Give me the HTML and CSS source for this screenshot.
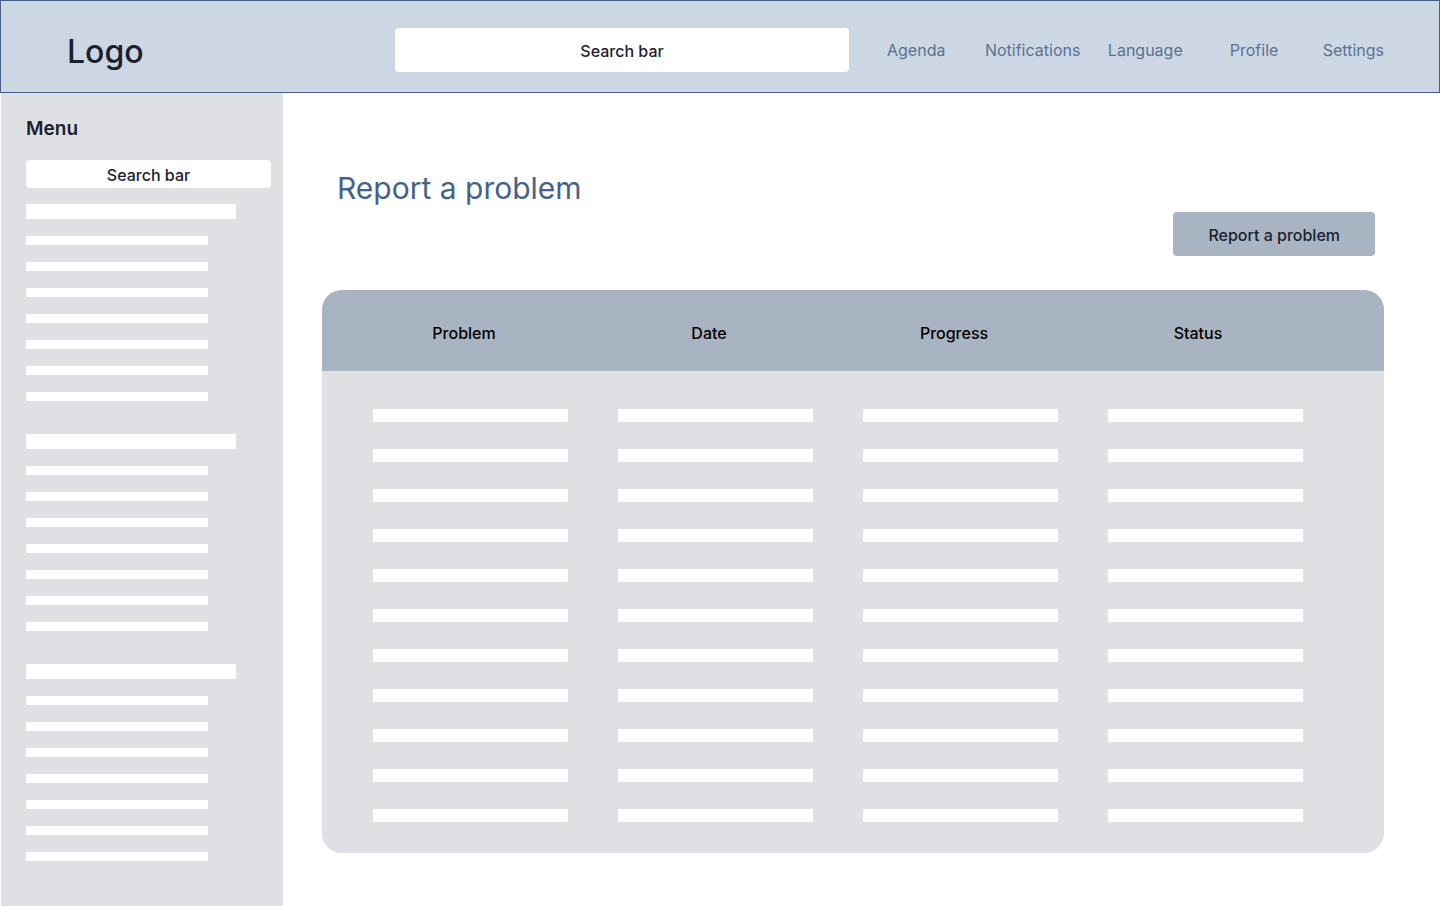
FILE: index.html
```html
<!DOCTYPE html>
<html lang="en">
<head>
  <meta charset="utf-8">
  <meta name="viewport" content="width=device-width, initial-scale=1">
  <title>Report a problem</title>
  <link rel="stylesheet" href="styles.css">
</head>
<body>
  <header class="topbar">
    <a class="logo" href="#">Logo</a>
    <input class="search search-large" type="text" placeholder="Search bar" aria-label="Search the site">
    <nav class="topnav" aria-label="Main">
      <a href="#">Agenda</a>
      <a href="#">Notifications</a>
      <a href="#">Language</a>
      <a href="#">Profile</a>
      <a href="#">Settings</a>
    </nav>
  </header>

  <div class="layout">
    <aside class="sidebar">
      <h2 class="menu-title">Menu</h2>
      <input class="search search-small" type="text" placeholder="Search bar" aria-label="Search the menu">
      <div class="menu-groups">
        <ul class="menu-group"><li class="head"></li><li></li><li></li><li></li><li></li><li></li><li></li><li></li></ul>
        <ul class="menu-group"><li class="head"></li><li></li><li></li><li></li><li></li><li></li><li></li><li></li></ul>
        <ul class="menu-group"><li class="head"></li><li></li><li></li><li></li><li></li><li></li><li></li><li></li></ul>
      </div>
    </aside>

    <main class="content">
      <div class="page-head">
        <h1 class="page-title">Report a problem</h1>
        <button class="report-button" type="button">Report a problem</button>
      </div>
      <table class="problems">
        <colgroup>
          <col class="col-problem"><col class="col-date"><col class="col-progress"><col class="col-status">
        </colgroup>
        <thead>
          <tr><th scope="col">Problem</th><th scope="col">Date</th><th scope="col">Progress</th><th scope="col">Status</th></tr>
        </thead>
        <tbody>
          <tr><td><span class="bar"></span></td><td><span class="bar"></span></td><td><span class="bar"></span></td><td><span class="bar"></span></td></tr>
          <tr><td><span class="bar"></span></td><td><span class="bar"></span></td><td><span class="bar"></span></td><td><span class="bar"></span></td></tr>
          <tr><td><span class="bar"></span></td><td><span class="bar"></span></td><td><span class="bar"></span></td><td><span class="bar"></span></td></tr>
          <tr><td><span class="bar"></span></td><td><span class="bar"></span></td><td><span class="bar"></span></td><td><span class="bar"></span></td></tr>
          <tr><td><span class="bar"></span></td><td><span class="bar"></span></td><td><span class="bar"></span></td><td><span class="bar"></span></td></tr>
          <tr><td><span class="bar"></span></td><td><span class="bar"></span></td><td><span class="bar"></span></td><td><span class="bar"></span></td></tr>
          <tr><td><span class="bar"></span></td><td><span class="bar"></span></td><td><span class="bar"></span></td><td><span class="bar"></span></td></tr>
          <tr><td><span class="bar"></span></td><td><span class="bar"></span></td><td><span class="bar"></span></td><td><span class="bar"></span></td></tr>
          <tr><td><span class="bar"></span></td><td><span class="bar"></span></td><td><span class="bar"></span></td><td><span class="bar"></span></td></tr>
          <tr><td><span class="bar"></span></td><td><span class="bar"></span></td><td><span class="bar"></span></td><td><span class="bar"></span></td></tr>
          <tr><td><span class="bar"></span></td><td><span class="bar"></span></td><td><span class="bar"></span></td><td><span class="bar"></span></td></tr>
        </tbody>
      </table>
    </main>
  </div>
</body>
</html>
```
FILE: styles.css
```css
* {
  box-sizing: border-box;
}

body {
  display: flex;
  flex-direction: column;
  min-height: 100vh;
  margin: 0;
  background: #ffffff;
  color: #1c2130;
  font-family: Inter, "Open Sans", sans-serif;
  font-size: 16px;
  line-height: 20px;
}

.topbar {
  display: grid;
  grid-template-columns: 328fr 454fr 535fr;
  align-items: center;
  padding: 27px 55px 20px 66px;
  border: 1px solid #456187;
  background: #cdd7e3;
}

.logo {
  padding-top: 4px;
  color: #1c2130;
  font-size: 32px;
  font-weight: 500;
  line-height: 40px;
  text-decoration: none;
}

.search {
  width: 100%;
  padding: 2px 12px 0;
  border: 0;
  border-radius: 4px;
  background: #ffffff;
  color: #1c2130;
  font: inherit;
  font-weight: 500;
  text-align: center;
}

.search::placeholder {
  color: #1c2130;
  opacity: 1;
}

.search-large {
  height: 44px;
}

.search-small {
  height: 28px;
}

.topnav {
  display: grid;
  grid-template-columns: 98fr 123fr 122fr 93fr 61fr;
  margin-left: 38px;
}

.topnav a {
  color: #587296;
  text-decoration: none;
}

.layout {
  display: flex;
  flex: 1;
}

.sidebar {
  flex: none;
  width: 282px;
  margin-left: 1px;
  padding: 22px 12px 32px 25px;
  background: #dfe0e4;
}

.menu-title {
  margin: 0 0 17px;
  font-size: 19px;
  font-weight: 600;
  line-height: 28px;
}

.menu-groups {
  display: flex;
  flex-direction: column;
  gap: 33px;
  margin-top: 16px;
}

.menu-group {
  display: flex;
  flex-direction: column;
  gap: 17px;
  margin: 0;
  padding: 0;
  list-style: none;
}

.menu-group li {
  width: 182px;
  height: 9px;
  background: #ffffff;
}

.menu-group .head {
  width: 210px;
  height: 15px;
}

.content {
  flex: 1;
  padding: 75px 56px 53px 39px;
}

.page-head {
  display: flex;
  flex-direction: column;
  gap: 4px;
  margin-bottom: 34px;
  padding: 0 9px 0 15px;
}

.page-title {
  margin: 0;
  color: #456187;
  font-size: 30px;
  font-weight: 400;
  line-height: 40px;
}

.report-button {
  align-self: flex-end;
  height: 44px;
  padding: 2px 35px 0;
  border: 0;
  border-radius: 4px;
  background: #a9b4c2;
  color: #1c2130;
  font: inherit;
  font-weight: 500;
}

.problems {
  width: 100%;
  overflow: hidden;
  border-radius: 20px;
  border-spacing: 0;
  background: #dfe0e4;
  table-layout: fixed;
}

.col-problem {
  width: 271px;
}

.col-date,
.col-progress {
  width: 245px;
}

.col-status {
  width: 301px;
}

.problems th {
  padding: 33px 38px 28px 25px;
  background: #a9b4c2;
  color: #000000;
  font-weight: 500;
  text-align: center;
}

.problems td {
  padding: 27px 25px 0;
}

.problems tbody tr:first-child td {
  padding-top: 38px;
}

.problems tbody tr:last-child td {
  padding-bottom: 31px;
}

.problems th:first-child,
.problems td:first-child {
  padding-left: 51px;
}

.problems th:last-child {
  padding-right: 96px;
}

.problems td:last-child {
  padding-right: 81px;
}

.bar {
  display: block;
  height: 13px;
  background: #ffffff;
}
```
